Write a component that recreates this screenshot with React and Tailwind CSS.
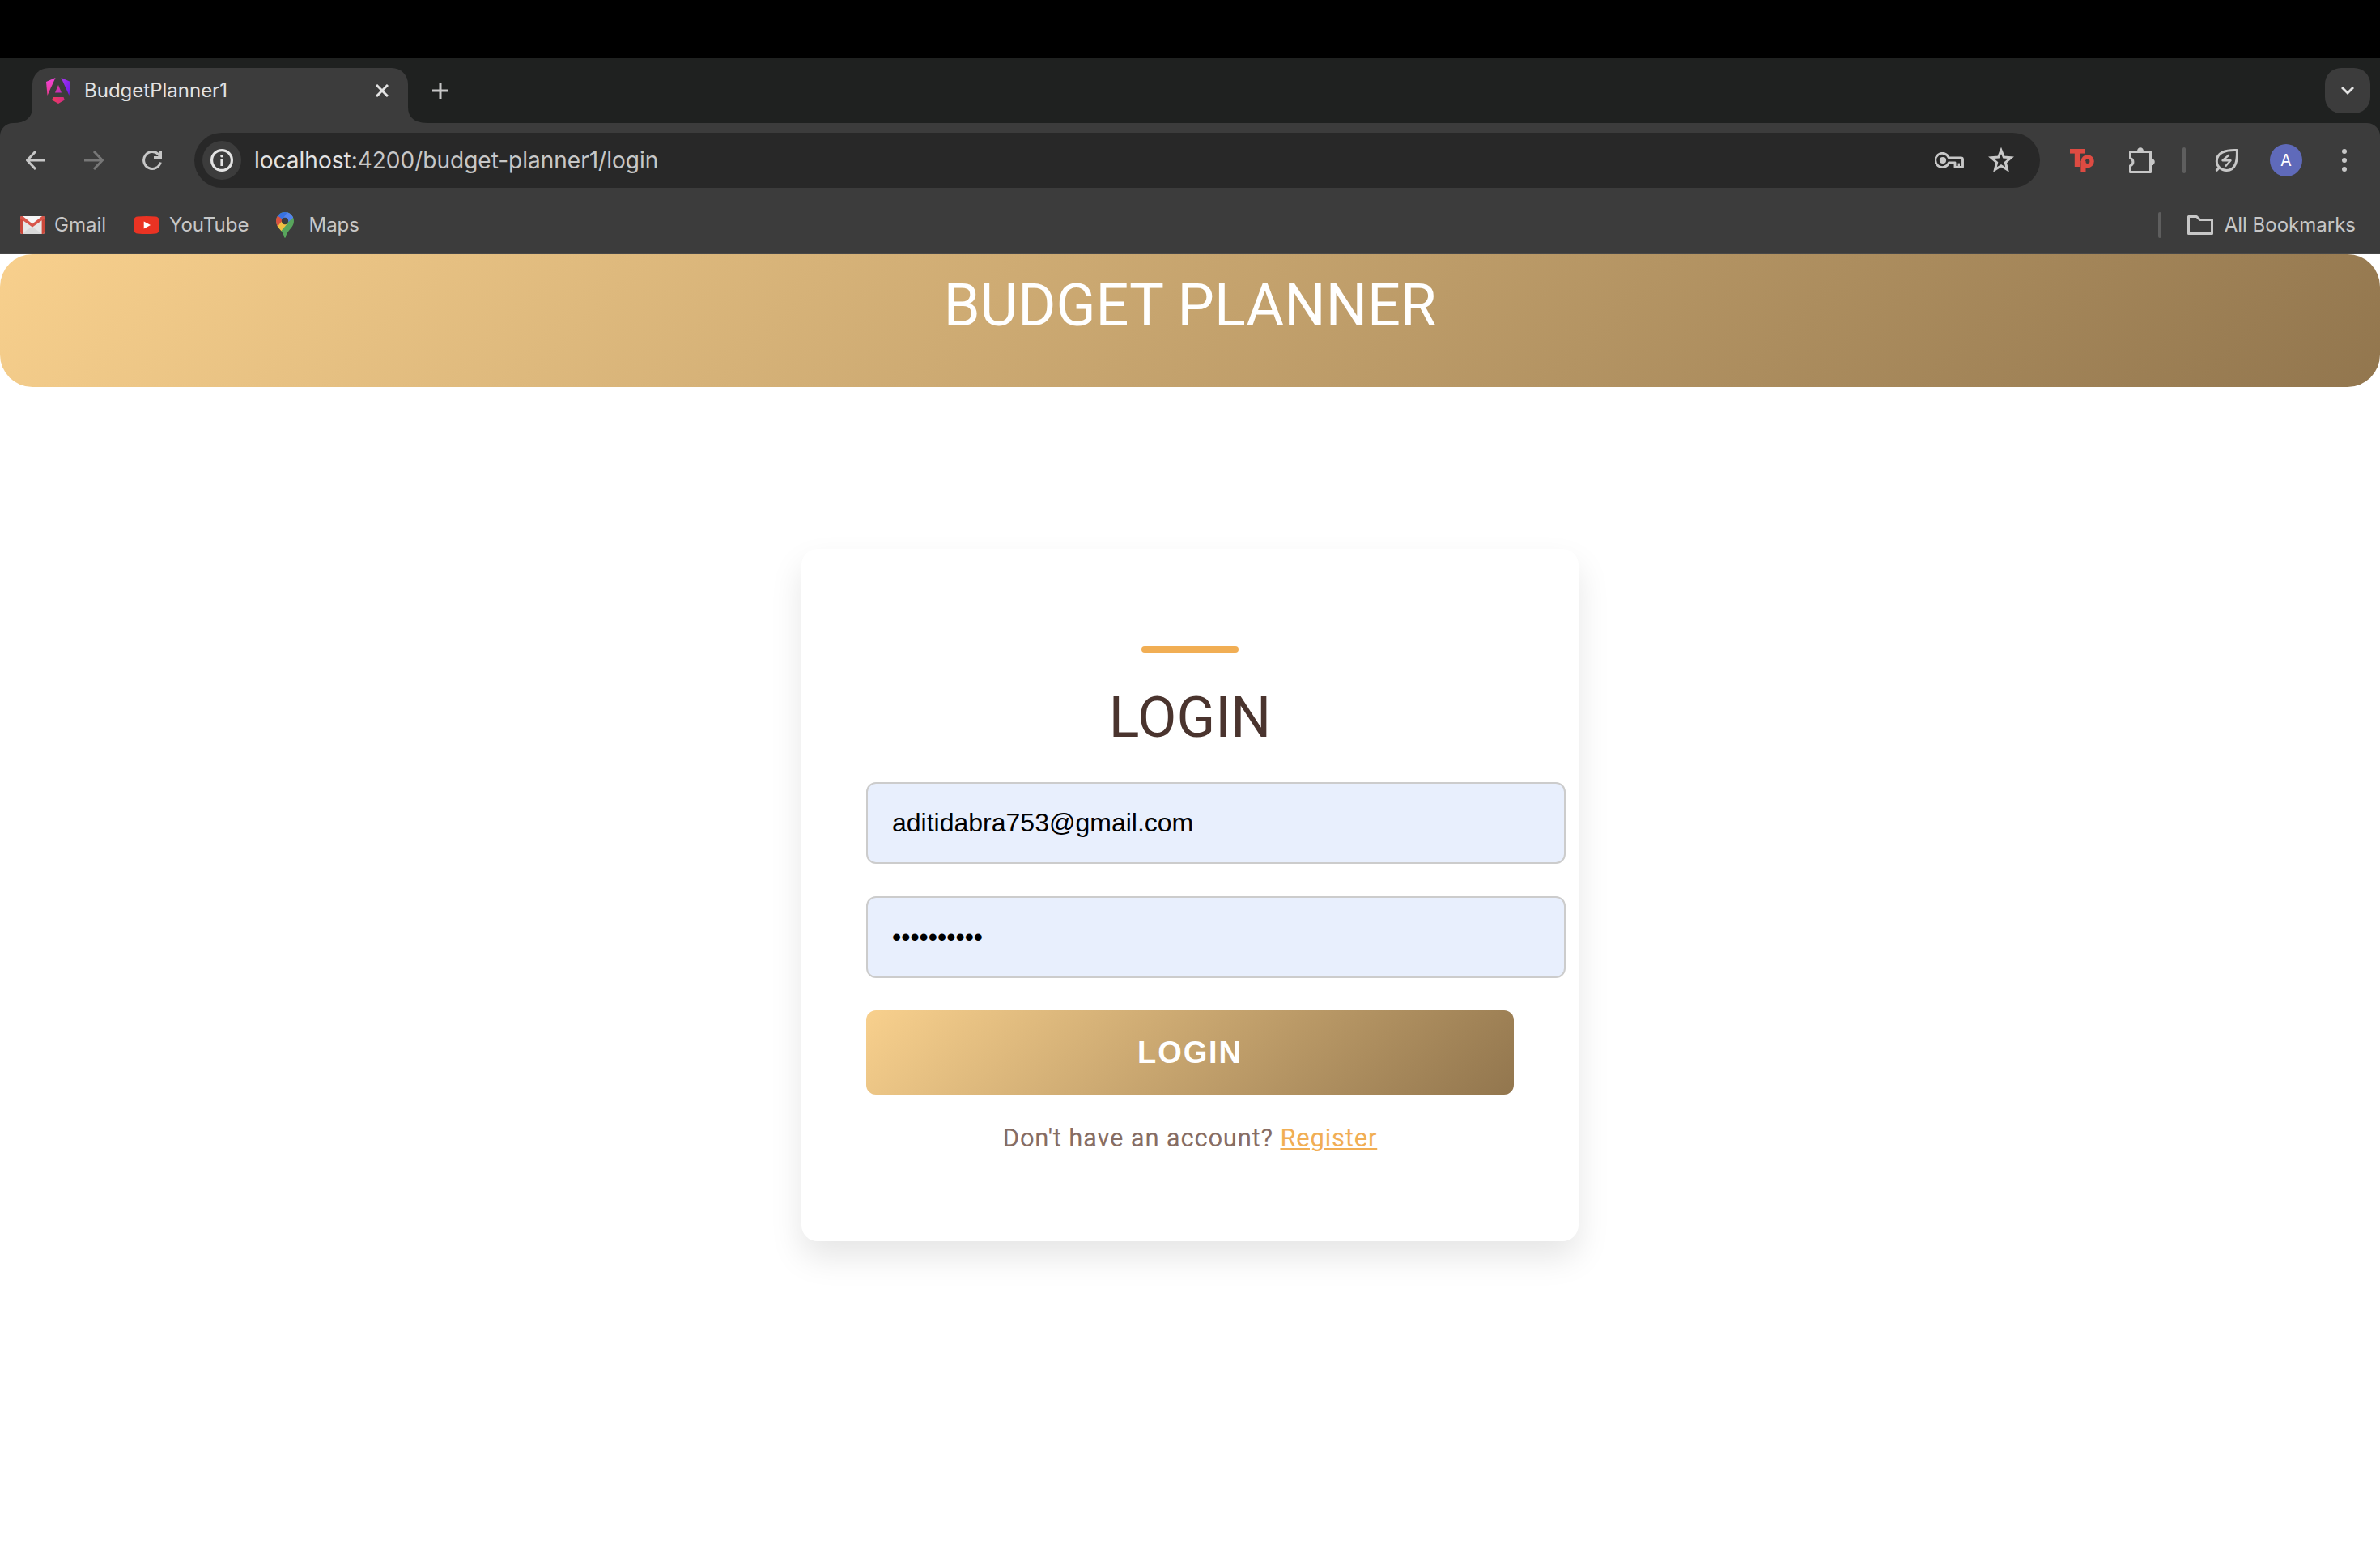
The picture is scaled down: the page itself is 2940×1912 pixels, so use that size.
import React from "react";

function AngularLogo() {
  return (
    <svg className="h-8 w-[30px] shrink-0" viewBox="0 0 30 32" aria-hidden="true">
      <defs>
        <linearGradient id="ng-left" x1="0" y1="0" x2="0" y2="1">
          <stop offset="0" stopColor="#ef43dd" />
          <stop offset="1" stopColor="#ec3a8e" />
        </linearGradient>
        <linearGradient id="ng-right" x1="0" y1="0" x2="1" y2="1">
          <stop offset="0" stopColor="#a93ae8" />
          <stop offset="1" stopColor="#6a12f0" />
        </linearGradient>
        <linearGradient id="ng-mid" x1="0" y1="0" x2="1" y2="1">
          <stop offset="0" stopColor="#f0388f" />
          <stop offset="1" stopColor="#b62cc8" />
        </linearGradient>
        <linearGradient id="ng-base" x1="0" y1="0" x2="1" y2="0">
          <stop offset="0" stopColor="#f03a5c" />
          <stop offset="1" stopColor="#d02c86" />
        </linearGradient>
      </defs>
      <path fill="url(#ng-left)" d="M11.5 0 L1.5 22 L0 5 Z" />
      <path fill="url(#ng-right)" d="M18.5 0 L28.5 22 L30 5 Z" />
      <path fill="url(#ng-mid)" d="M15 9 L19 18.5 H11 Z" />
      <path fill="url(#ng-base)" d="M8.5 24 H21.5 L22.8 27.5 L15 32 L7.2 27.5 Z" />
    </svg>
  );
}

function CloseIcon() {
  return (
    <svg className="size-4" viewBox="0 0 16 16" stroke="#e3e3e3" strokeWidth="3" fill="none" aria-hidden="true">
      <path d="M1 1 L15 15 M15 1 L1 15" />
    </svg>
  );
}

function PlusIcon() {
  return (
    <svg className="size-5" viewBox="0 0 20 20" stroke="#c7c7c7" strokeWidth="3" fill="none" aria-hidden="true">
      <path d="M10 0 V20 M0 10 H20" />
    </svg>
  );
}

function ChevronIcon() {
  return (
    <svg className="h-3 w-4" viewBox="0 0 16 12" stroke="#e3e3e3" strokeWidth="3" fill="none" aria-hidden="true">
      <path d="M1 2 L8 9 L15 2" />
    </svg>
  );
}

function ArrowIcon({ forward }) {
  return (
    <svg className="size-6" viewBox="0 0 24 24" stroke={forward ? "#777777" : "#c7c7c7"} strokeWidth="3" fill="none" aria-hidden="true">
      {forward ? <path d="M0 12 H22 M12 1 L22.5 12 L12 23" /> : <path d="M24 12 H2 M12 1 L1.5 12 L12 23" />}
    </svg>
  );
}

function ReloadIcon() {
  return (
    <svg className="size-6" viewBox="0 0 24 24" stroke="#c7c7c7" strokeWidth="3" fill="none" aria-hidden="true">
      <path d="M22.3 14.5 A10.5 10.5 0 1 1 20 5 L22.5 8" />
      <path d="M22.5 0 V8.5 H14" />
    </svg>
  );
}

function InfoIcon() {
  return (
    <svg className="size-7" viewBox="0 0 28 28" fill="none" aria-hidden="true">
      <circle cx="14" cy="14" r="12.4" stroke="#e3e3e3" strokeWidth="3.2" />
      <path d="M14 12.5 V21" stroke="#e3e3e3" strokeWidth="3.2" />
      <circle cx="14" cy="8.8" r="1.8" fill="#e3e3e3" />
    </svg>
  );
}

function KeyIcon() {
  return (
    <svg className="h-5 w-9" viewBox="0 0 36 20" fill="none" stroke="#c7c7c7" strokeWidth="2.9" aria-hidden="true">
      <path d="M17.4 7 A8.6 8.6 0 1 0 17.4 13 H25 V18.5 H34.5 V9 Q34.5 7 32.5 7 Z" strokeLinejoin="round" />
      <circle cx="10" cy="10" r="4.1" fill="#c7c7c7" stroke="none" />
      <path d="M29.8 18 V13.6" strokeWidth="2.4" />
    </svg>
  );
}

function StarIcon() {
  return (
    <svg className="size-8" viewBox="0 0 32 32" fill="none" stroke="#c7c7c7" strokeWidth="3.1" aria-hidden="true">
      <path d="M16 3.8 L19.3 12 L28.2 12.8 L21.4 18.7 L23.5 27.5 L16 22.8 L8.5 27.5 L10.6 18.7 L3.8 12.8 L12.7 12 Z" />
    </svg>
  );
}

function TpIcon() {
  return (
    <svg className="h-7 w-[30px]" viewBox="0 0 30 28" aria-hidden="true">
      <g fill="#dd4b42">
        <rect width="18" height="5.6" />
        <rect x="5.8" width="6.2" height="22" />
        <rect x="13.4" y="15" width="6.1" height="13" />
      </g>
      <circle cx="21.7" cy="15.3" r="5.4" fill="none" stroke="#dd4b42" strokeWidth="5.4" />
    </svg>
  );
}

function PuzzleIcon() {
  return (
    <svg className="size-8" viewBox="0 0 32 32" fill="none" aria-hidden="true">
      <path stroke="#c7c7c7" strokeWidth="3" strokeLinejoin="round" d="M1.5 5.5 H26.5 V30.5 H1.5 V22.6 A4.8 4.8 0 0 0 1.5 13.4 Z" />
      <path fill="#c7c7c7" d="M10 5 A4 4.8 0 0 1 18 5 Z M27 13.8 A4.8 4.2 0 0 1 27 22.2 Z" />
    </svg>
  );
}

function LeafIcon() {
  return (
    <svg className="h-7 w-[30px]" viewBox="0 0 30 28" fill="none" stroke="#c7c7c7" strokeWidth="3" aria-hidden="true">
      <path d="M27.3 1.6 C28 14 26 26.4 14.6 26.4 C7.6 26.4 2.3 21.6 2.3 15 C2.3 4.5 13 1 27.3 1.6 Z" strokeLinejoin="round" />
      <path d="M1.6 27 L6 22.6" />
      <path d="M17.5 7.5 L9.5 14.2 H19.5 L13 21.5" strokeWidth="2.4" strokeLinejoin="round" />
    </svg>
  );
}

function DotsIcon() {
  return (
    <svg className="h-7 w-1.5" viewBox="0 0 6 28" fill="#c7c7c7" aria-hidden="true">
      <circle cx="3" cy="3" r="3" />
      <circle cx="3" cy="14" r="3" />
      <circle cx="3" cy="25" r="3" />
    </svg>
  );
}

function GmailIcon() {
  return (
    <svg className="h-[22px] w-[30px]" viewBox="0 0 30 22" aria-hidden="true">
      <rect width="30" height="22" rx="2" fill="#e6e6e6" />
      <path fill="#f6f6f6" d="M3 0 H27 L15 9 Z" />
      <path fill="#d9d9d9" d="M8 17 L15 13 L27 22 H3 Z" />
      <path fill="#c9483b" d="M0 2 Q0 0 2 0 L3.4 3 V22 H2 Q0 22 0 20 Z M30 2 Q30 0 28 0 L26.6 3 V22 H28 Q30 22 30 20 Z" />
      <path fill="#d8564a" d="M0 2 Q0 0 2 0 H3 L15 9.4 L27 0 H28 Q30 0 30 2 V3 L15 13.4 L0 3 Z" />
    </svg>
  );
}

function YouTubeIcon() {
  return (
    <svg className="h-[22px] w-8" viewBox="0 0 32 22" aria-hidden="true">
      <path fill="#ea3323" d="M5 0.5 Q16 -0.5 27 0.5 Q31 0.8 31.5 4.5 Q32.3 11 31.5 17.5 Q31 21.2 27 21.5 Q16 22.5 5 21.5 Q1 21.2 0.5 17.5 Q-0.3 11 0.5 4.5 Q1 0.8 5 0.5 Z" />
      <path fill="#ffffff" d="M12.7 6.4 L21 11 L12.7 15.6 Z" />
    </svg>
  );
}

function MapsIcon() {
  return (
    <svg className="h-8 w-[22px]" viewBox="0 0 22 32" aria-hidden="true">
      <defs>
        <clipPath id="pin">
          <path d="M11 0 A11 11 0 0 1 22 11 C22 15.5 19.5 18.5 16.5 22 C14 25 12.6 27.6 12 30.8 Q11 33 10 30.8 C9.4 27.6 8 25 5.5 22 C2.5 18.5 0 15.5 0 11 A11 11 0 0 1 11 0 Z" />
        </clipPath>
      </defs>
      <g clipPath="url(#pin)">
        <rect width="22" height="32" fill="#58a55c" />
        <path fill="#f1bf42" d="M-2 20 L8 8 L15 13 L4 26 Z" />
        <path fill="#d85140" d="M-1 2 L3 4 L9 9 L1.5 18 L-2 14 Z" />
        <path fill="#3871e0" d="M2 4.5 L6 -1 H16 L8 9 Z" />
        <path fill="#5383ec" d="M14.5 -1 L22 2 L21 7 L13 14 L8 9 Z" />
      </g>
      <circle cx="11" cy="11" r="4.2" fill="#3c3c3c" />
    </svg>
  );
}

function FolderIcon() {
  return (
    <svg className="h-6 w-8" viewBox="0 0 32 24" fill="none" stroke="#c7c7c7" strokeWidth="3" strokeLinejoin="round" aria-hidden="true">
      <path d="M1.5 1.5 H11.5 L15.5 5.5 H30.5 V22.5 H1.5 Z" />
    </svg>
  );
}

const bookmarks = [
  { name: "Gmail", Icon: GmailIcon, gap: "gap-3" },
  { name: "YouTube", Icon: YouTubeIcon, gap: "gap-3" },
  { name: "Maps", Icon: MapsIcon, gap: "gap-[18px]" },
];

function TabStrip() {
  return (
    <div className="flex h-20 items-end justify-between bg-[#1f2120] pr-3">
      <div className="flex items-end">
        <svg className="h-5 w-10" viewBox="0 0 40 20" fill="#3c3c3c" aria-hidden="true">
          <path d="M40 0 Q40 20 16 20 H40 Z" />
        </svg>
        <div className="flex h-[68px] w-[464px] items-center rounded-t-[20px] bg-[#3c3c3c] pr-6 pb-3 pl-[17px]">
          <AngularLogo />
          <span className="ml-[17px] flex-1 text-[24px] text-[#e3e3e3]">BudgetPlanner1</span>
          <button type="button" aria-label="Close tab"><CloseIcon /></button>
        </div>
        <svg className="h-5 w-6" viewBox="0 0 24 20" fill="#3c3c3c" aria-hidden="true">
          <path d="M0 0 Q0 20 24 20 H0 Z" />
        </svg>
        <button type="button" aria-label="New tab" className="mb-[30px] ml-1.5"><PlusIcon /></button>
      </div>
      <button type="button" aria-label="Search tabs" className="mb-3 flex size-14 items-center justify-center rounded-[20px] bg-[#3c3c3c]">
        <ChevronIcon />
      </button>
    </div>
  );
}

function Toolbar() {
  return (
    <div className="bg-[#1f2120]">
      <div className="flex h-[92px] items-center rounded-t-2xl bg-[#3c3c3c] pr-[41px] pl-8">
        <div className="flex gap-12">
          <button type="button" aria-label="Back"><ArrowIcon /></button>
          <button type="button" aria-label="Forward"><ArrowIcon forward /></button>
          <button type="button" aria-label="Reload"><ReloadIcon /></button>
        </div>
        <div className="ml-10 flex h-[68px] flex-1 items-center rounded-full bg-[#282828] pr-8 pl-2.5">
          <button type="button" aria-label="Site information" className="flex size-12 items-center justify-center rounded-full bg-[#3c3c3c]">
            <InfoIcon />
          </button>
          <span className="ml-4 flex-1 text-[28px] text-[#c7c7c7]">
            <span className="text-[#e3e3e3]">localhost</span>:4200/budget-planner1/login
          </span>
          <button type="button" aria-label="Manage passwords"><KeyIcon /></button>
          <button type="button" aria-label="Bookmark this page" className="ml-[30px]"><StarIcon /></button>
        </div>
        <button type="button" aria-label="Tp extension" className="ml-[37px]"><TpIcon /></button>
        <button type="button" aria-label="Extensions" className="ml-[43px]"><PuzzleIcon /></button>
        <div className="ml-[34px] h-8 w-1 rounded-full bg-[#5e5e5e]" />
        <button type="button" aria-label="Energy saver" className="ml-9"><LeafIcon /></button>
        <button type="button" aria-label="Profile" className="ml-[38px] size-10 rounded-full bg-[#5f6aba] text-[20px] text-white">A</button>
        <button type="button" aria-label="Menu" className="ml-[49px]"><DotsIcon /></button>
      </div>
    </div>
  );
}

function BookmarkBar() {
  return (
    <nav aria-label="Bookmarks" className="flex h-[70px] items-center justify-between border-b-2 border-[#474747] bg-[#3c3c3c] pr-[30px] pl-[25px] text-[24px] text-[#c7c7c7]">
      <div className="flex items-center gap-[34px]">
        {bookmarks.map(({ name, Icon, gap }) => (
          <a key={name} href="#" className={"flex items-center " + gap}>
            <Icon />
            {name}
          </a>
        ))}
      </div>
      <div className="flex items-center">
        <div className="mr-8 h-8 w-1 rounded-full bg-[#5e5e5e]" />
        <button type="button" className="flex items-center gap-3.5">
          <FolderIcon />
          All Bookmarks
        </button>
      </div>
    </nav>
  );
}

function LoginCard() {
  return (
    <form
      onSubmit={(e) => e.preventDefault()}
      className="w-full max-w-[960px] rounded-[20px] bg-white px-20 pt-[120px] pb-[103px] shadow-[0_20px_40px_rgba(0,0,0,0.1)]"
    >
      <div className="mx-auto h-2 w-[120px] rounded bg-[#f1ae54]" />
      <h2 className="mt-10 text-center text-[70px] leading-[80px] text-[#4a342e]">LOGIN</h2>
      <div className="-mr-16 mt-10 flex flex-col gap-10">
        <input
          type="email"
          aria-label="Email"
          defaultValue="aditidabra753@gmail.com"
          className="h-[101px] w-full rounded-xl border-2 border-[#cccccc] bg-[#e8effd] px-[30px] font-['Liberation_Sans',Arial,sans-serif] text-[32px] text-black"
        />
        <input
          type="password"
          aria-label="Password"
          defaultValue="abcdefghij"
          className="h-[101px] w-full rounded-xl border-2 border-[#cccccc] bg-[#e8effd] px-[30px] font-['Liberation_Sans',Arial,sans-serif] text-[32px] text-black"
        />
      </div>
      <button
        type="submit"
        className="mt-10 h-[104px] w-full rounded-xl bg-[linear-gradient(135deg,#f8d08d,#92764e)] font-['Liberation_Sans',Arial,sans-serif] text-[38px] font-bold tracking-wider text-white"
      >
        LOGIN
      </button>
      <p className="mt-[30px] text-center text-[31px] leading-[48px] tracking-wide text-[#876d63]">
        Don't have an account? <a href="#" className="text-[#f1ae54] underline">Register</a>
      </p>
    </form>
  );
}

export default function App() {
  return (
    <div className="flex min-h-screen flex-col bg-white">
      <div className="font-[Inter,sans-serif]">
        <div className="h-[72px] bg-black" />
        <TabStrip />
        <Toolbar />
        <BookmarkBar />
      </div>
      <div className="flex flex-1 flex-col font-[Roboto,sans-serif]">
        <header className="h-[164px] rounded-[40px] bg-[linear-gradient(135deg,#f8d08d,#92764e)] pt-[22px] text-center">
          <h1 className="text-[72px] leading-[84px] text-white">BUDGET PLANNER</h1>
        </header>
        <main className="flex justify-center pt-[200px]">
          <LoginCard />
        </main>
      </div>
    </div>
  );
}
